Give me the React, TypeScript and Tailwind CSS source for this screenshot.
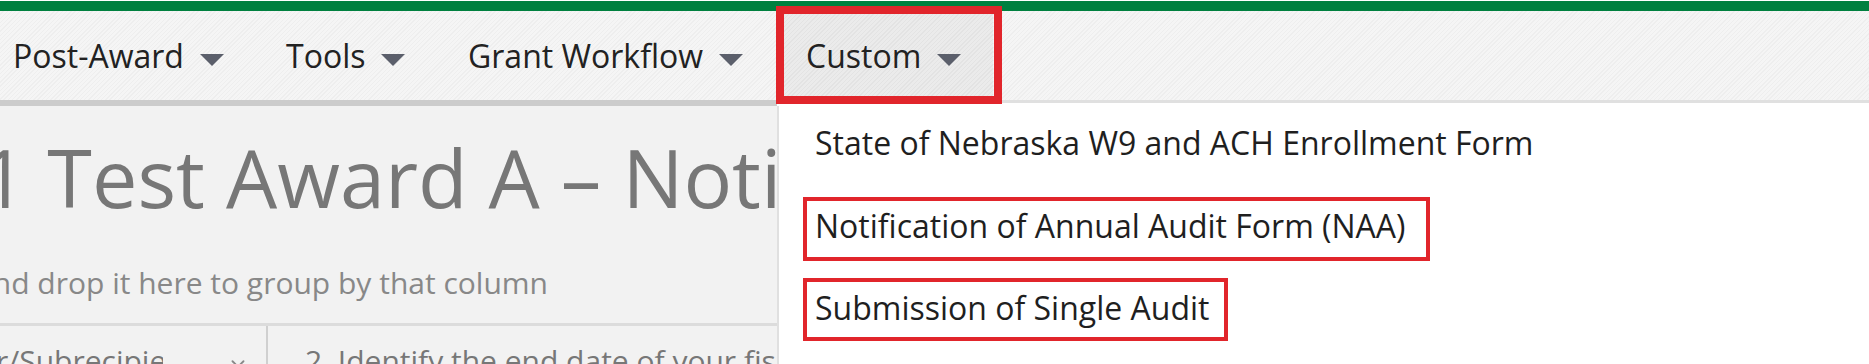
import { ChevronDown } from "lucide-react";

const navItems = [
  { label: "Post-Award", width: "w-[273px]" },
  { label: "Tools", width: "w-[182px]" },
  { label: "Grant Workflow", width: "w-[316px]" },
];

function Caret() {
  return (
    <span className="ml-[16px] inline-block h-0 w-0 translate-y-[4px] border-x-[12px] border-t-[12px] border-x-transparent border-t-[#5b5f6b]" />
  );
}

export default function App() {
  return (
    <div className="relative h-[364px] w-[1869px] overflow-hidden bg-[#f2f2f2] font-['Open_Sans',sans-serif]">
      <div className="h-px bg-white" />
      <div className="h-[10px] bg-[#00803f]" />

      {/* Top menu */}
      <nav className="flex h-[89px] items-stretch bg-[repeating-linear-gradient(135deg,#f5f5f5_0px,#f5f5f5_2px,#eeeeee_2px,#eeeeee_3px)] pl-[13px] text-[32px] leading-[42px] text-[#222]">
        {navItems.map((item) => (
          <div key={item.label} className={`flex shrink-0 items-center ${item.width}`}>
            <span>{item.label}</span>
            <Caret />
          </div>
        ))}
        <div className="flex w-[209px] shrink-0 items-center bg-[repeating-linear-gradient(135deg,#ebebeb_0px,#ebebeb_2px,#e3e3e3_2px,#e3e3e3_3px)] pl-[22px]">
          <span>Custom</span>
          <Caret />
        </div>
      </nav>

      <div className="flex h-[6px]">
        <div className="w-[777px] bg-[#cccccc]" />
        <div className="flex-1 border-t-[3px] border-[#e0e0e0] bg-white" />
      </div>

      <div className="flex h-[258px]">
        {/* Page behind the menu */}
        <main className="w-[777px] shrink-0 overflow-hidden">
          <h1 className="mt-[16px] ml-[-159px] whitespace-nowrap text-[81px] leading-[110px] font-normal text-[#777]">
            2021 Test Award A – Notification of Annual Audit Form
          </h1>
          <div className="mt-[31px] flex w-[548px] justify-end">
            <p className="shrink-0 whitespace-nowrap text-[30px] leading-[40px] text-[#888]">
              Drag a column header and drop it here to group by that column
            </p>
          </div>
          <div className="mt-[20px] h-[3px] bg-[#dcdcdc]" />
          <div className="flex text-[30px] leading-[40px] text-[#777]">
            <div className="flex w-[268px] shrink-0 border-r-2 border-[#d0d0d0] pt-[15px]">
              <div className="ml-[-4px] w-[167px] overflow-hidden whitespace-nowrap">r/Subrecipient</div>
              <ChevronDown className="ml-[64px] mt-[12px] h-[22px] w-[22px] text-[#888]" strokeWidth={2} />
            </div>
            <div className="whitespace-nowrap pl-[37px] pt-[15px]">
              2. Identify the end date of your fiscal year
            </div>
          </div>
        </main>

        {/* Custom dropdown */}
        <aside className="flex-1 border-l-2 border-[#e0e0e0] bg-white pt-[16px] text-[32px] leading-[42px] text-[#1f1f1f]">
          <div className="ml-[36px] whitespace-nowrap">State of Nebraska W9 and ACH Enrollment Form</div>
          <div className="ml-[24px] mt-[33px] w-[627px] whitespace-nowrap border-4 border-[#e1252b] pb-[10px] pl-[8px] pt-[4px]">
            Notification of Annual Audit Form (NAA)
          </div>
          <div className="ml-[24px] mt-[17px] w-[425px] whitespace-nowrap border-4 border-[#e1252b] pb-[8px] pl-[8px] pt-[5px]">
            Submission of Single Audit
          </div>
        </aside>
      </div>

      {/* highlight around the Custom menu */}
      <div className="absolute left-[776px] top-[6px] h-[98px] w-[226px] border-8 border-[#e1252b]" />
    </div>
  );
}
